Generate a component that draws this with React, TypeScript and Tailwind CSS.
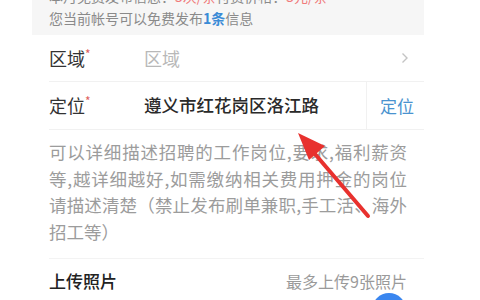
import React from "react";

export default function App() {
  return (
    <div
      className="relative w-[480px] h-[300px] overflow-hidden bg-white"
      style={{ fontFamily: '"Noto Sans CJK SC", "Noto Sans", sans-serif' }}
    >
      <div className="ml-[32px] w-[392px]">
        {/* Notice box */}
        <div className="-mt-[15px] bg-[#f6f6f6] pl-[17px] pb-[6px] text-[14px] leading-[22px] text-[#8a8a8a]">
          <div>
            本月免费发布信息：<span className="text-[#f07a7a]">5次/条</span>
            付费价格：<span className="text-[#f07a7a]">5元/条</span>
          </div>
          <div>
            您当前帐号可以免费发布<span className="font-bold text-[#3a8bd6]">1条</span>信息
          </div>
        </div>

        {/* Region */}
        <div className="ml-[17px] h-[47px] flex items-center border-b border-[#f1f1f1] pr-[17px]">
          <div className="w-[95px] text-[18px] text-[#333]">
            区域<span className="text-[12px] align-top text-[#e06060]">*</span>
          </div>
          <div className="flex-1 text-[18px] text-[#b8b8b8]">区域</div>
          <svg width="8" height="12" viewBox="0 0 8 12" className="mr-[-2px]">
            <path d="M1.5 1.5 L6 6 L1.5 10.5" fill="none" stroke="#c4c4c4" strokeWidth="1.4" />
          </svg>
        </div>

        {/* Location */}
        <div className="ml-[17px] h-[48px] flex items-center border-b border-[#f1f1f1]">
          <div className="w-[95px] text-[18px] text-[#333]">
            定位<span className="text-[12px] align-top text-[#e06060]">*</span>
          </div>
          <div className="flex-1 text-[17.5px] font-medium text-[#2a2a2a]">遵义市红花岗区洛江路</div>
          <div className="h-full w-[58px] border-l border-[#f1f1f1] flex items-center pl-[13px] text-[17px] text-[#4a93cf]">
            定位
          </div>
        </div>

        {/* Description */}
        <div className="ml-[17px] pr-[17px] pt-[9px] pb-[13px] border-b border-[#f3f3f3] text-[17.5px] leading-[26.5px] text-[#9c9c9c] whitespace-nowrap">
          <div className="text-justify [text-align-last:justify]">可以详细描述招聘的工作岗位,要求,福利薪资</div>
          <div className="text-justify [text-align-last:justify]">等,越详细越好,如需缴纳相关费用押金的岗位</div>
          <div className="text-justify [text-align-last:justify]">请描述清楚（禁止发布刷单兼职,手工活、海外</div>
          <div>招工等）</div>
        </div>

        {/* Upload */}
        <div className="ml-[17px] pr-[17px] h-[44px] flex items-center justify-between">
          <div className="text-[17px] font-medium text-[#222]">上传照片</div>
          <div className="text-[16px] text-[#9a9a9a]">最多上传9张照片</div>
        </div>
      </div>

      {/* Blue button peeking at bottom */}
      <div className="absolute left-[372px] top-[293px] w-[34px] h-[34px] rounded-full bg-[#3a86ef]" />

      {/* Red annotation arrow */}
      <svg className="absolute left-0 top-0" width="480" height="300" viewBox="0 0 480 300">
        <line x1="368" y1="216" x2="309" y2="147" stroke="#e8312e" strokeWidth="4" strokeLinecap="round" />
        <polygon points="298,133 325,146 309,160" fill="#e8312e" />
      </svg>
    </div>
  );
}
